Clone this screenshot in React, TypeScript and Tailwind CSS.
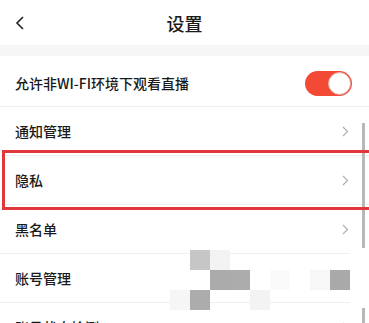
const rows = ["通知管理", "隐私", "黑名单", "账号管理", "账号状态检测"];

const blocks = [
  { x: 190, y: 250, c: "bg-[#c6c6c6]" },
  { x: 210, y: 250, c: "bg-[#f3f3f3]" },
  { x: 210, y: 270, c: "bg-[#ababab]" },
  { x: 230, y: 270, c: "bg-[#acacac]" },
  { x: 270, y: 270, c: "bg-[#fafafa]" },
  { x: 310, y: 270, c: "bg-[#f8f8f8]" },
  { x: 330, y: 270, c: "bg-[#a9a9a9]" },
  { x: 170, y: 290, c: "bg-[#f6f6f6]" },
  { x: 190, y: 290, c: "bg-[#acacac]" },
  { x: 250, y: 290, c: "bg-[#f3f3f3]" },
];

function Chevron() {
  return (
    <svg width="7" height="11" viewBox="0 0 7 11" className="text-[#b0b0b0]">
      <path d="M1 1l4.5 4.5L1 10" fill="none" stroke="currentColor" strokeWidth="1.2" />
    </svg>
  );
}

export default function App() {
  return (
    <div
      className="relative w-[369px] h-[323px] overflow-hidden bg-white text-[#1a1a1a]"
      style={{ fontFamily: '"Noto Sans CJK SC", "Noto Sans", sans-serif' }}
    >
      <div className="h-[45px] flex items-center justify-center relative">
        <svg width="10" height="14" viewBox="0 0 10 14" className="absolute left-[15px] top-[16px]">
          <path d="M8 1L2 7l6 6" fill="none" stroke="#222" strokeWidth="1.6" />
        </svg>
        <span className="text-[18px] leading-none font-medium">设置</span>
      </div>
      <div className="h-[11px] bg-[#f6f6f6]" />
      <div className="h-[51px] flex items-center justify-between pl-[15px] pr-[17px] border-b border-[#f0f0f0]">
        <span className="text-[14px] font-medium pt-[4px]">允许非WI-FI环境下观看直播</span>
        <div className="w-[47px] h-[25px] rounded-full bg-[#f24a35] flex items-center justify-end p-[1px] mt-[4px]">
          <div className="w-[23px] h-[23px] rounded-full bg-white border border-[#e3a79e]" />
        </div>
      </div>
      {rows.map((r) => (
        <div
          key={r}
          className="h-[49px] flex items-center justify-between pl-[15px] pr-[20px] border-b border-[#f0f0f0]"
        >
          <span className="text-[14px] font-medium">{r}</span>
          <Chevron />
        </div>
      ))}
      <div className="absolute left-[362px] top-[123px] w-[3px] h-[200px] bg-[#b8b8b8]" />
      <div className="absolute left-[2px] top-[150px] w-[370px] h-[60px] border-[3px] border-[#e0373c]" />
      {blocks.map((b, i) => (
        <div key={i} className={`absolute w-[20px] h-[20px] ${b.c}`} style={{ left: b.x, top: b.y }} />
      ))}
      <div className="absolute left-[350px] top-[248px] w-[19px] h-[60px] bg-white" />
    </div>
  );
}
